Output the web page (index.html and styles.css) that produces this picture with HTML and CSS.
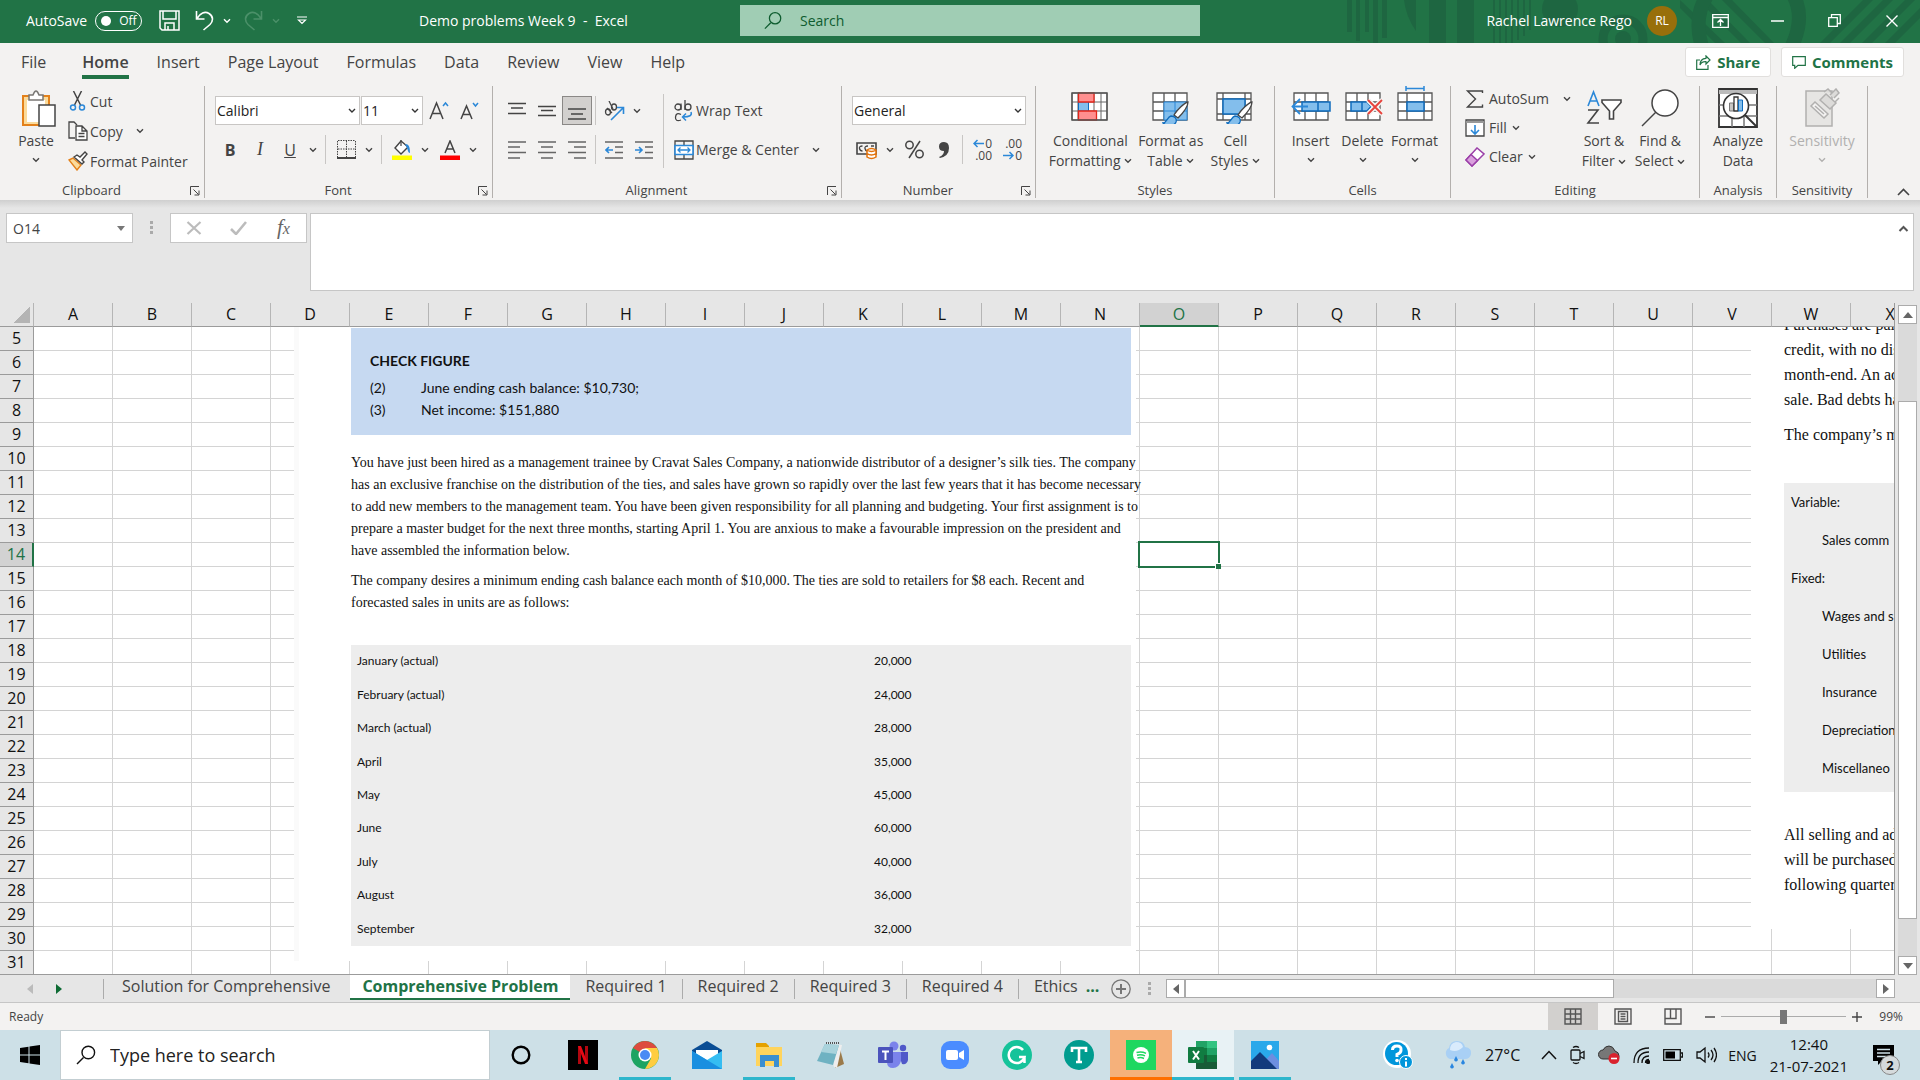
FILE: index.html
```html
<!DOCTYPE html>
<html lang="en">
<head>
  <meta charset="UTF-8" />
  <meta name="viewport" content="width=device-width, initial-scale=1.0"/>
  <title>Demo problems Week 9 - Excel</title>
  <link rel="stylesheet" href="styles.css">
</head>
<body>

  <!-- shared icons -->
  <svg class="defs" width="0" height="0">
    <symbol id="chev" viewBox="0 0 8 6"><path d="M1 1.2l3 3 3-3" fill="none" stroke="currentColor" stroke-width="1.4"/></symbol>
    <symbol id="launch" viewBox="0 0 10 10"><path d="M9 .5H.5V9M3.500 3.500l5 5M9 4.500V9H4.500" fill="none" stroke="currentColor"/></symbol>
    <symbol id="lens" viewBox="0 0 20 20"><path d="M1 19l6.500-6.500" fill="none" stroke="currentColor" stroke-width="1.4"/><circle cx="12.300" cy="7.500" r="6.300" fill="none" stroke="currentColor" stroke-width="1.4"/></symbol>
    <symbol id="brush" viewBox="0 0 28 26"><path d="M26 1C22 2 15 9 12 14l4 3C20 13 26 6 26 1z" fill="#fff" stroke="#444" stroke-width="1.300"/><path d="M1 22c4 0 4-6 8-7 4 0 6 3 5 6-2 5-10 4-13 1z" fill="#83beec" stroke="#0f6cbd" stroke-width="1.300"/></symbol>
  </svg>

  <header class="titlebar">
    <svg class="pattern" width="580" height="43" viewBox="0 0 580 43">
      <g fill="#1e6641">
        <path d="M7 0h5v32H7zM16 0h4v41h-4zM25 0h4v32h-4zM33 0h5v43h-5zM42 0h5v38h-5zM64 0h12v31q-10-14-12-31zM89 0h17v43H89zM117 0h17v43h-17z"/>
        <path d="M153 0h2v43h-2zM159 0h2v43h-2zM165 0h2v43h-2zM171 0h2v43h-2zM177 0h2v40h-2zM183 0h2v36h-2zM189 0h2v30h-2z"/>
        <circle cx="220" cy="9" r="18"/>
        <path d="M340 8l35 35h10L340 0zM358 0l43 43h9L368 0zM382 0l43 43h9L392 0z"/>
        <path d="M480 43l43-43h10l-43 43zM500 43l43-43h10l-43 43zM522 43l43-43h10l-43 43zM545 43l35-35v10l-25 25z"/>
      </g>
      <circle cx="283" cy="39" r="20" fill="none" stroke="#1e6641" stroke-width="9"/>
      <circle cx="283" cy="39" r="8" fill="#1e6641"/>
      <path d="M355-10q-20 25-8 60M434-10q18 25 0 60" transform="translate(16 0)" fill="none" stroke="#1e6641" stroke-width="14"/>
    </svg>
    <div class="quick">
      <label class="autosave">AutoSave <input type="checkbox" class="switch" id="autosave"><span class="switch-face">Off</span></label>
      <button class="tb-btn save" aria-label="Save"><svg width="21" height="21" viewBox="0 0 21 21" fill="none" stroke="#fff" stroke-width="1.500"><path d="M1 1h19v19H3l-2-2zM4 1v8h13V1M6 20v-7h9v7M9 20v-4"/></svg></button>
      <button class="tb-btn" aria-label="Undo"><svg width="19" height="21" viewBox="0 0 19 21" fill="none" stroke="#fff" stroke-width="1.600"><path d="M1.500 1v8h8M2 8.500C5 3 10 1 14 3.500c5 3 4 8 1 11L8.500 20"/></svg></button>
      <button class="tb-btn drop" aria-label="Undo list"><svg width="8" height="6"><use href="#chev"/></svg></button>
      <button class="tb-btn off" aria-label="Redo"><svg width="19" height="21" viewBox="0 0 19 21" fill="none" stroke="#4b9069" stroke-width="1.600"><path d="M17.500 1v8h-8M17 8.500C14 3 9 1 5 3.500c-5 3-4 8-1 11L10.500 20"/></svg></button>
      <button class="tb-btn drop off" aria-label="Redo list"><svg width="8" height="6"><use href="#chev"/></svg></button>
      <button class="tb-btn custom" aria-label="Customize toolbar"><svg width="10" height="9" viewBox="0 0 10 9" fill="none" stroke="#fff" stroke-width="1.200"><path d="M0 1h10M1.500 4l3.500 3.500L8.500 4z"/></svg></button>
    </div>
    <h1>Demo problems Week 9&nbsp; -&nbsp; Excel</h1>
    <div class="find">
      <svg width="18" height="19"><use href="#lens"/></svg>
      <input type="search" placeholder="Search" aria-label="Search">
    </div>
    <div class="account">
      <span>Rachel Lawrence Rego</span>
      <span class="avatar">RL</span>
    </div>
    <div class="window-btns">
      <button aria-label="Ribbon display options"><svg width="17" height="14" viewBox="0 0 17 14" fill="none" stroke="#fff" stroke-width="1.300"><path d="M.7.7h15.600v12.600H.7zM.7 3.500h15.600M8.500 12V6M5.500 8.500l3-3 3 3"/></svg></button>
      <button aria-label="Minimize"><svg width="13" height="2"><path d="M0 1h13" stroke="#fff" stroke-width="1.500"/></svg></button>
      <button aria-label="Restore"><svg width="13" height="13" viewBox="0 0 13 13" fill="none" stroke="#fff" stroke-width="1.300"><path d="M.7 3.700h8.600v8.600H.7zM3.500 3.500V.7h8.800v8.800H9.500"/></svg></button>
      <button aria-label="Close"><svg width="12" height="12" viewBox="0 0 12 12" stroke="#fff" stroke-width="1.400"><path d="M.5.5l11 11M11.500.5l-11 11"/></svg></button>
    </div>
  </header>

  <nav class="tabs">
    <a href="#">File</a>
    <a href="#" class="active">Home</a>
    <a href="#">Insert</a>
    <a href="#">Page Layout</a>
    <a href="#">Formulas</a>
    <a href="#">Data</a>
    <a href="#">Review</a>
    <a href="#">View</a>
    <a href="#">Help</a>
    <div class="tab-actions">
      <button><svg width="15" height="15" viewBox="0 0 15 15" fill="none" stroke="#217346" stroke-width="1.200"><path d="M4 5H.7v9.300H12V10M10 1l4 4-4 4V6.700C7 6.500 5 7.500 4 10c0-4 2.500-6.500 6-6.700z"/></svg>Share</button>
      <button><svg width="14" height="13" viewBox="0 0 14 13" fill="none" stroke="#217346" stroke-width="1.200"><path d="M.7.700h12.600v8.600H6L2.700 12.300V9.300h-2z"/></svg>Comments</button>
    </div>
  </nav>

  <section class="ribbon">
    <div class="group g-clipboard">
      <div class="tools">
        <button class="big paste"><svg width="36" height="40" viewBox="0 0 36 40"><path d="M2 8h26v29H2z" fill="#fbdb9b" stroke="#e3811b" stroke-width="2"/><path d="M6 12h18v22H6z" fill="#fff"/><path d="M8 12V7h4q3-8 6 0h4v5z" fill="#fff" stroke="#797774" stroke-width="1.500"/><path d="M18 17h16v21H18z" fill="#fff" stroke="#444" stroke-width="1.500"/></svg>Paste<svg width="8" height="6"><use href="#chev"/></svg></button>
        <div class="stack">
          <button class="row-btn"><svg width="16" height="20" viewBox="0 0 16 20" fill="none" stroke-width="1.500"><path d="M3.500 0l7 14M11.500 0l-7 14" stroke="#444"/><circle cx="3" cy="16.500" r="2.500" stroke="#2b88d8"/><circle cx="12" cy="16.500" r="2.500" stroke="#2b88d8"/></svg>Cut</button>
          <button class="row-btn"><svg width="20" height="20" viewBox="0 0 20 20" fill="none" stroke="#444" stroke-width="1.300"><path d="M7 17H1V1h5l3 3"/><path d="M8 5h6l5 5v9H8zM14 5v5h5M10.500 12.500h6M10.500 15.500h6" fill="#fff"/></svg>Copy <svg width="8" height="6"><use href="#chev"/></svg></button>
          <button class="row-btn"><svg width="20" height="20" viewBox="0 0 20 20" stroke-width="1.400"><path d="M1 9l4-2 8 7-4 5z" fill="#fbdb9b" stroke="#e3811b"/><path d="M6 6l8 7 2-2-2-2 5-6-2-2-5 5-3-2z" fill="#fff" stroke="#444"/></svg>Format Painter</button>
        </div>
      </div>
      <footer class="with-launch">Clipboard<svg class="launch" width="10" height="10"><use href="#launch"/></svg></footer>
    </div>

    <div class="group g-font">
      <div class="tools lines">
        <div class="line">
          <select class="s-font" aria-label="Font"><option>Calibri</option></select>
          <select class="s-size" aria-label="Font size"><option>11</option></select>
          <button class="ic" aria-label="Increase font size"><svg width="20" height="20" viewBox="0 0 20 20" fill="none" stroke-width="1.500"><path d="M1 18L7.500 2 14 18M3.500 12.500h8" stroke="#444"/><path d="M14 5l2.500-3L19 5" stroke="#2b88d8"/></svg></button>
          <button class="ic" aria-label="Decrease font size"><svg width="19" height="20" viewBox="0 0 19 20" fill="none" stroke-width="1.500"><path d="M1 18L6.500 5 12 18M3 13.500h7" stroke="#444"/><path d="M13 2l2.500 3L18 2" stroke="#2b88d8"/></svg></button>
        </div>
        <div class="line">
          <button class="ic b">B</button>
          <button class="ic i">I</button>
          <button class="ic u">U</button>
          <button class="dd" aria-label="Underline list"><svg width="8" height="6"><use href="#chev"/></svg></button>
          <i class="sep"></i>
          <button class="ic" aria-label="Borders"><svg width="19" height="19" viewBox="0 0 19 19" fill="none" stroke="#444"><path d="M1 .5h17M1 9h17M.5 1v16M9.500 1v16M18.500 1v16" stroke-dasharray="1.500 1"/><path d="M0 18h19" stroke-width="2"/></svg></button>
          <button class="dd" aria-label="Borders list"><svg width="8" height="6"><use href="#chev"/></svg></button>
          <i class="sep"></i>
          <button class="ic" aria-label="Fill color"><svg width="20" height="20" viewBox="0 0 20 20"><path d="M9 1l7 6-7 7-6-6z" fill="#fff" stroke="#444" stroke-width="1.400"/><path d="M9 6V0" stroke="#444" stroke-width="1.200"/><path d="M13 4c4 0 5 3 5 9-2 0-2-3-3-5z" fill="#2b88d8"/><path d="M0 15.500h20V20H0z" fill="#ff0"/></svg></button>
          <button class="dd fill-list" aria-label="Fill color list"><svg width="8" height="6"><use href="#chev"/></svg></button>
          <button class="ic" aria-label="Font color"><svg width="20" height="20" viewBox="0 0 20 20"><path d="M5 13L10 1l5 12M6.500 9h7" fill="none" stroke="#444" stroke-width="1.500"/><path d="M0 15.500h20V20H0z" fill="red"/></svg></button>
          <button class="dd" aria-label="Font color list"><svg width="8" height="6"><use href="#chev"/></svg></button>
        </div>
      </div>
      <footer class="with-launch">Font<svg class="launch" width="10" height="10"><use href="#launch"/></svg></footer>
    </div>

    <div class="group g-align">
      <div class="tools split">
        <div class="lines">
          <div class="line">
            <button class="ic" aria-label="Top align"><svg width="18" height="18" viewBox="0 0 18 18" stroke="#444" stroke-width="1.300"><path d="M0 1.500h18M3 6h12M0 11.500h18"/></svg></button>
            <button class="ic" aria-label="Middle align"><svg width="18" height="18" viewBox="0 0 18 18" stroke="#444" stroke-width="1.300"><path d="M0 4.500h18M3 8.500h12M0 13.500h18"/></svg></button>
            <button class="ic on" aria-label="Bottom align"><svg width="18" height="18" viewBox="0 0 18 18" stroke="#444" stroke-width="1.300"><path d="M0 7h18M3 12h12M0 17h18"/></svg></button>
            <i class="sep"></i>
            <button class="ic" aria-label="Orientation"><svg width="22" height="20" viewBox="0 0 22 20" fill="none" stroke-width="1.300"><g stroke="#444"><ellipse cx="5" cy="11" rx="2.500" ry="3"/><path d="M4 7l5 5"/><ellipse cx="11" cy="6" rx="2.500" ry="3"/><path d="M6 0l4 8"/></g><path d="M8 19L20 7M14 6.500h6.500V13" stroke="#2b88d8" stroke-width="1.600"/></svg></button>
            <button class="dd" aria-label="Orientation list"><svg width="8" height="6"><use href="#chev"/></svg></button>
          </div>
          <div class="line">
            <button class="ic" aria-label="Align left"><svg width="18" height="18" viewBox="0 0 18 18" stroke="#666" stroke-width="1.600"><path d="M0 1h18M0 6h12M0 11.500h18M0 17h12"/></svg></button>
            <button class="ic" aria-label="Center"><svg width="18" height="18" viewBox="0 0 18 18" stroke="#666" stroke-width="1.600"><path d="M0 1h18M3 6h12M0 11.500h18M3 17h12"/></svg></button>
            <button class="ic" aria-label="Align right"><svg width="18" height="18" viewBox="0 0 18 18" stroke="#666" stroke-width="1.600"><path d="M0 1h18M6 6h12M0 11.500h18M6 17h12"/></svg></button>
            <i class="sep"></i>
            <button class="ic" aria-label="Decrease indent"><svg width="18" height="18" viewBox="0 0 18 18" fill="none" stroke="#666" stroke-width="1.600"><path d="M0 1h18M10 6h8M10 11.500h8M0 17h18"/><path d="M8 9H1M4 6L1 9l3 3" stroke="#2b88d8"/></svg></button>
            <button class="ic" aria-label="Increase indent"><svg width="18" height="18" viewBox="0 0 18 18" fill="none" stroke="#666" stroke-width="1.600"><path d="M0 1h18M10 6h8M10 11.500h8M0 17h18"/><path d="M0 9h7M4 6l3 3-3 3" stroke="#2b88d8"/></svg></button>
          </div>
        </div>
        <div class="lines wraps">
          <div class="line"><button class="row-btn"><svg width="20" height="22" viewBox="0 0 20 22" fill="none" stroke="#444" stroke-width="1.300"><circle cx="4" cy="7" r="3"/><path d="M7 3.500V10M11 0v10"/><circle cx="14" cy="7" r="3"/><path d="M7 14.500Q2 12 1.500 17T7 20"/><path d="M17 12q2 5-8 5M12 13.500L8.500 17l3.500 3.500" stroke="#2b88d8" stroke-width="1.500"/></svg>Wrap Text</button></div>
          <div class="line"><button class="row-btn"><svg width="20" height="20" viewBox="0 0 20 20" fill="none" stroke="#444" stroke-width="1.300"><path d="M1 1h18v18H1zM10 1v4M10 15v4"/><path d="M1 5.500h18v9H1z" fill="#fff" stroke="#2b88d8" stroke-width="1.600"/><path d="M4 10h12M6.500 7.500L4 10l2.500 2.500M13.500 7.500L16 10l-2.500 2.500" stroke="#2b88d8"/></svg>Merge &amp; Center <svg width="8" height="6"><use href="#chev"/></svg></button></div>
        </div>
      </div>
      <footer class="with-launch">Alignment<svg class="launch" width="10" height="10"><use href="#launch"/></svg></footer>
    </div>

    <div class="group g-number">
      <div class="tools lines">
        <div class="line"><select class="s-num" aria-label="Number format"><option>General</option></select></div>
        <div class="line">
          <button class="ic" aria-label="Accounting format"><svg width="22" height="20" viewBox="0 0 22 20" fill="none"><path d="M1 3h19v11H1z" stroke="#444" stroke-width="1.600"/><path d="M6.500 6Q3 6 3.500 8.500T6.500 11M12 6Q8.500 6 9 8.500t2 2.500M15 6h3" stroke="#444" stroke-width="1.300"/><path d="M11 10v7q4.500 3 9 0v-7q-4.500-3-9 0zM11 10q4.500 3 9 0M11 13.500q4.500 3 9 0" fill="#fff" stroke="#e3730b" stroke-width="1.500"/></svg></button>
          <button class="dd" aria-label="Accounting list"><svg width="8" height="6"><use href="#chev"/></svg></button>
          <button class="ic pct" aria-label="Percent"><svg width="19" height="19" viewBox="0 0 19 19" fill="none" stroke="#444" stroke-width="1.500"><circle cx="4.500" cy="5" r="3.700"/><circle cx="14.500" cy="14" r="3.700"/><path d="M15 1L4 18"/></svg></button>
          <button class="ic" aria-label="Comma"><svg width="12" height="18" viewBox="0 0 12 18"><path d="M1 16q5-2 5-6-5 0-5-4.500T6 1q5 0 5 6 0 8-9 10z" fill="#444"/></svg></button>
          <i class="sep"></i>
          <button class="ic dec" aria-label="Increase decimal"><span><svg width="11" height="9" viewBox="0 0 11 9"><path d="M11 4.500H1M4.500 1L1 4.500 4.500 8"/></svg>0</span><span>.00</span></button>
          <button class="ic dec" aria-label="Decrease decimal"><span>.00</span><span><svg width="11" height="9" viewBox="0 0 11 9"><path d="M0 4.500h10M6.500 1L10 4.500 6.500 8"/></svg>0</span></button>
        </div>
      </div>
      <footer class="with-launch">Number<svg class="launch" width="10" height="10"><use href="#launch"/></svg></footer>
    </div>

    <div class="group g-styles">
      <div class="tools">
        <button class="big"><svg width="38" height="34" viewBox="0 0 38 34"><path d="M1 3h35v27H1zM1 12h35M1 21h35M7 3v27M15 3v27M23 3v27M30 3v27" fill="#fff" stroke="#666"/><path d="M7.500 12h10v9h-10z" fill="#83beec" stroke="#0f6cbd"/><path d="M7.500 3h15.500v9H7.500zM7.500 21h18v9h-18z" fill="#ff8f8f" stroke="#e3271b" stroke-width="1.300"/><path d="M1 3h35v27H1z" fill="none" stroke="#555" stroke-width="1.500"/></svg>Conditional<span>Formatting <svg width="8" height="6"><use href="#chev"/></svg></span></button>
        <button class="big"><svg width="38" height="34" viewBox="0 0 38 34"><path d="M1 3h34v27H1zM1 12h34M1 21h34M12 3v27M23 3v27" fill="#fff" stroke="#555" stroke-width="1.300"/><path d="M12 12h23v18H12zM23 12v18M12 21h23" fill="#83beec" stroke="#2b88d8"/><use href="#brush" x="10" y="11" width="28" height="26"/></svg>Format as<span>Table <svg width="8" height="6"><use href="#chev"/></svg></span></button>
        <button class="big"><svg width="38" height="34" viewBox="0 0 38 34"><path d="M1 3h34v27H1zM7 3v27M29 3v27M1 9h34M1 24h34" fill="#fff" stroke="#555" stroke-width="1.300"/><path d="M7 9h22v15H7z" fill="#83beec" stroke="#0f6cbd" stroke-width="1.500"/><use href="#brush" x="10" y="11" width="28" height="26"/></svg>Cell<span>Styles <svg width="8" height="6"><use href="#chev"/></svg></span></button>
      </div>
      <footer>Styles</footer>
    </div>

    <div class="group g-cells">
      <div class="tools">
        <button class="big"><svg width="40" height="34" viewBox="0 0 40 34"><path d="M3 3h34v27H3zM14 3v27M25 3v27M3 12h34M3 21h34" fill="#fff" stroke="#555" stroke-width="1.300"/><path d="M11 12h28v9H11zM27 12v9" fill="#83beec" stroke="#0f6cbd" stroke-width="1.500"/><path d="M17 16.500H2M9 9l-7.500 7.500L9 24" fill="none" stroke="#2b88d8" stroke-width="1.800"/></svg>Insert<svg width="8" height="6"><use href="#chev"/></svg></button>
        <button class="big"><svg width="40" height="34" viewBox="0 0 40 34"><path d="M3 3h34v27H3zM14 3v27M25 3v27M3 12h34M3 21h34" fill="#fff" stroke="#555" stroke-width="1.300"/><path d="M8 12h16l4 4.500-4 4.500H8zM19 12v9" fill="#83beec" stroke="#0f6cbd" stroke-width="1.500"/><path d="M25 10l14 14M39 10L25 24" stroke="#f4f3f1" stroke-width="5"/><path d="M25 10l14 14M39 10L25 24" stroke="#e8423b" stroke-width="1.800"/></svg>Delete<svg width="8" height="6"><use href="#chev"/></svg></button>
        <button class="big tall"><svg width="38" height="40" viewBox="0 0 38 40"><path d="M2 9h34v27H2zM11 9v27M28 9v27M2 18h34M2 27h34" fill="#fff" stroke="#555" stroke-width="1.300"/><path d="M11 18h17v9H11z" fill="#83beec" stroke="#0f6cbd" stroke-width="1.500"/><path d="M10 4.500h18M10 2v5M28 2v5" stroke="#2b88d8" stroke-width="1.500"/></svg>Format<svg width="8" height="6"><use href="#chev"/></svg></button>
      </div>
      <footer>Cells</footer>
    </div>

    <div class="group g-editing">
      <div class="tools">
        <div class="stack">
          <button class="row-btn wide"><svg width="20" height="18" viewBox="0 0 20 18" fill="none" stroke="#444" stroke-width="1.400"><path d="M17.500 3V1H2.500l8 8-8 8h15v-2.500"/></svg>AutoSum <svg width="8" height="6"><use href="#chev"/></svg></button>
          <button class="row-btn"><svg width="20" height="18" viewBox="0 0 20 18" fill="none"><path d="M1 1h18v16H1z" fill="#fff" stroke="#444" stroke-width="1.300"/><path d="M1 2h18v2H1z" fill="#999"/><path d="M10 6v9M6 11l4 4 4-4" stroke="#2b88d8" stroke-width="1.600"/></svg>Fill <svg width="8" height="6"><use href="#chev"/></svg></button>
          <button class="row-btn"><svg width="20" height="20" viewBox="0 0 20 20"><path d="M1 13L12 1l7 6L7 19z" fill="#fff" stroke="#9b3fa8" stroke-width="1.500"/><path d="M1 13l5-5.500 6.500 6L7 19z" fill="#d9a0dd" stroke="#9b3fa8" stroke-width="1.500"/></svg>Clear <svg width="8" height="6"><use href="#chev"/></svg></button>
        </div>
        <button class="big sort"><svg width="38" height="40" viewBox="0 0 38 40" fill="none" stroke-width="1.600"><path d="M3 18L8.500 4 14 18M5 13h7" stroke="#2b88d8"/><path d="M3 22h10L3 35h11" stroke="#444"/><path d="M17 12h19v2.500L28.500 23v8h-4v-8L17 14.500z" fill="#fff" stroke="#444"/></svg>Sort &amp;<span>Filter <svg width="8" height="6"><use href="#chev"/></svg></span></button>
        <button class="big"><svg width="40" height="40" viewBox="0 0 40 40" fill="none" stroke="#444" stroke-width="1.500"><circle cx="25" cy="15" r="13" fill="#fff"/><path d="M16 24L2 38"/></svg>Find &amp;<span>Select <svg width="8" height="6"><use href="#chev"/></svg></span></button>
      </div>
      <footer>Editing</footer>
    </div>

    <div class="group g-analysis">
      <div class="tools">
        <button class="big"><svg width="40" height="40" viewBox="0 0 40 40" fill="none" stroke="#333"><path d="M1 1h38v38H1z" fill="#fff" stroke-width="1.800"/><path d="M1 2h38v4H1z" fill="#bbb" stroke="none"/><path d="M1 17h38M1 28h38M14 28v11M26 28v11" stroke="#777" stroke-width="1.500"/><circle cx="18" cy="18" r="12.500" fill="#fff" stroke-width="1.600"/><path d="M11.500 15h4v8h-4z" fill="#c8c6c4" stroke="#777"/><path d="M16 9h4v14h-4z" fill="#fff" stroke-width="1.300"/><path d="M20.500 12h4v11h-4z" fill="#83beec" stroke="#0f6cbd"/><path d="M27 27l12 12" stroke-width="2"/></svg>Analyze<span>Data</span></button>
      </div>
      <footer>Analysis</footer>
    </div>

    <div class="group g-sens">
      <div class="tools">
        <button class="big" disabled><svg width="38" height="40" viewBox="0 0 38 40" fill="#e6e5e3" stroke="#b1b0af" stroke-width="1.500"><path d="M3 3h26v35H3z"/><path d="M8 18l4-4 13 12-4 4zM12 18l9 8" fill="#f3f2f1"/><path d="M17 12l6-6 10 9-6 6zM21 4l4-3 4 4M27 7l6-6 3 4-5 5M32 14l4-4" fill="#dcdbd9"/></svg>Sensitivity<svg width="8" height="6"><use href="#chev"/></svg></button>
      </div>
      <footer>Sensitivity</footer>
    </div>
    <button class="collapse" aria-label="Collapse ribbon"><svg width="13" height="8" viewBox="0 0 13 8"><path d="M1 7l5.500-5.500L12 7" fill="none" stroke="#444" stroke-width="1.600"/></svg></button>
  </section>

  <section class="formula">
    <div class="namebox"><input type="text" value="O14" aria-label="Name box"><i class="tri-down"></i></div>
    <i class="dots"></i>
    <div class="fx">
      <button aria-label="Cancel"><svg width="16" height="14" viewBox="0 0 16 14"><path d="M1.500 1l13 12M14.500 1l-13 12" stroke="#bcbcbc" stroke-width="2.200"/></svg></button>
      <button aria-label="Enter"><svg width="17" height="14" viewBox="0 0 17 14"><path d="M1 8l5 5L16 1" fill="none" stroke="#bcbcbc" stroke-width="2.600"/></svg></button>
      <button class="fn" aria-label="Insert function">f<small>x</small></button>
    </div>
    <div class="entry"><textarea aria-label="Formula bar"></textarea><svg width="11" height="7" viewBox="0 0 11 7"><path d="M1.500 6l4-4 4 4" fill="none" stroke="#555" stroke-width="2"/></svg></div>
  </section>

  <main class="sheet">
    <div class="grid">
      <table class="cells">
        <thead><tr id="cols"><th class="corner"></th></tr></thead>
        <tbody id="rows"></tbody>
      </table>

      <article class="picture problem">
        <div class="check">
          <h2>CHECK FIGURE</h2>
          <dl>
            <dt>(2)</dt><dd>June ending cash balance: $10,730;</dd>
            <dt>(3)</dt><dd>Net income: $151,880</dd>
          </dl>
        </div>
        <p>You have just been hired as a management trainee by Cravat Sales Company, a nationwide distributor of a designer’s silk ties. The company<br>
          has an exclusive franchise on the distribution of the ties, and sales have grown so rapidly over the last few years that it has become necessary<br>
          to add new members to the management team. You have been given responsibility for all planning and budgeting. Your first assignment is to<br>
          prepare a master budget for the next three months, starting April 1. You are anxious to make a favourable impression on the president and<br>
          have assembled the information below.</p>
        <p>The company desires a minimum ending cash balance each month of $10,000. The ties are sold to retailers for $8 each. Recent and<br>
          forecasted sales in units are as follows:</p>
        <table class="sales">
          <tr><td>January (actual)</td><td>20,000</td></tr>
          <tr><td>February (actual)</td><td>24,000</td></tr>
          <tr><td>March (actual)</td><td>28,000</td></tr>
          <tr><td>April</td><td>35,000</td></tr>
          <tr><td>May</td><td>45,000</td></tr>
          <tr><td>June</td><td>60,000</td></tr>
          <tr><td>July</td><td>40,000</td></tr>
          <tr><td>August</td><td>36,000</td></tr>
          <tr><td>September</td><td>32,000</td></tr>
        </table>
      </article>

      <article class="picture expenses">
        <p>Purchases are pai<br>credit, with no dis<br>month-end. An ac<br>sale. Bad debts ha</p>
        <p>The company’s m</p>
        <ul>
          <li>Variable:</li>
          <li class="sub">Sales comm</li>
          <li>Fixed:</li>
          <li class="sub">Wages and s</li>
          <li class="sub">Utilities</li>
          <li class="sub">Insurance</li>
          <li class="sub">Depreciation</li>
          <li class="sub">Miscellaneo</li>
        </ul>
        <p>All selling and ad<br>will be purchased<br>following quarter.</p>
      </article>
    </div>
    <div class="vscroll">
      <button aria-label="Scroll up"><i class="tri up"></i></button>
      <div class="track"><div class="thumb"></div></div>
      <button aria-label="Scroll down"><i class="tri down"></i></button>
    </div>
  </main>

  <div class="sheet-tabs">
    <div class="nav-btns"><i class="tri left"></i><i class="tri right"></i></div>
    <button class="first">Solution for Comprehensive</button>
    <button class="active">Comprehensive Problem</button>
    <button>Required 1</button>
    <button>Required 2</button>
    <button>Required 3</button>
    <button>Required 4</button>
    <button class="last">Ethics <b>...</b></button>
    <button class="add" aria-label="New sheet"><svg width="20" height="20" viewBox="0 0 20 20" fill="none" stroke="#777"><circle cx="10" cy="10" r="9.200" stroke-width="1.300"/><path d="M10 5v10M5 10h10" stroke-width="2"/></svg></button>
    <i class="dots"></i>
    <div class="hscroll">
      <button aria-label="Scroll left"><i class="tri left"></i></button>
      <div class="track"><div class="thumb"></div></div>
      <button aria-label="Scroll right"><i class="tri right"></i></button>
    </div>
  </div>

  <div class="status">
    <span>Ready</span>
    <div class="views">
      <button class="on" aria-label="Normal"><svg width="18" height="17" viewBox="0 0 18 17" fill="none" stroke="#555" stroke-width="1.400"><path d="M1 1h16v15H1zM6.500 1v15M11.500 1v15M1 6h16M1 11h16"/></svg></button>
      <button aria-label="Page layout"><svg width="18" height="17" viewBox="0 0 18 17" fill="none" stroke="#555" stroke-width="1.400"><path d="M1 1h16v15H1zM4.500 3.500h9v10h-9zM6.500 6h5M6.500 8.500h5M6.500 11h5"/></svg></button>
      <button aria-label="Page break"><svg width="18" height="17" viewBox="0 0 18 17" fill="none" stroke="#555" stroke-width="1.400"><path d="M1 1h16v15H1zM1 10.500h11V1M6.500 1v9.500"/></svg></button>
    </div>
    <div class="zoom">
      <button aria-label="Zoom out"><svg width="10" height="10"><path d="M0 5h10" stroke="#444" stroke-width="1.400"/></svg></button>
      <input type="range" min="0" max="100" value="50" aria-label="Zoom">
      <button aria-label="Zoom in"><svg width="10" height="10"><path d="M0 5h10M5 0v10" stroke="#444" stroke-width="1.400"/></svg></button>
      <span>99%</span>
    </div>
  </div>

  <footer class="taskbar">
    <button class="start" aria-label="Start"><svg width="20" height="20" viewBox="0 0 20 20"><path d="M0 3l8.500-1.300v7.800H0zM9.500 1.500L20 0v9.500H9.500zM0 10.500h8.500v7.800L0 17zM9.500 10.500H20V20L9.500 18.500z"/></svg></button>
    <div class="task-search">
      <svg width="20" height="20"><use href="#lens"/></svg>
      <input type="text" placeholder="Type here to search" aria-label="Type here to search">
    </div>
    <div class="apps">
      <button aria-label="Cortana"><svg width="20" height="20"><circle cx="10" cy="10" r="8.300" fill="none" stroke="#000" stroke-width="2.400"/></svg></button>
      <button aria-label="Netflix"><svg width="30" height="30" viewBox="0 0 30 30"><path d="M0 0h30v30H0z"/><path d="M10 6h3v18h-3zM17 6h3v18h-3z" fill="#b1060f"/><path d="M10 6h3l7 18h-3z" fill="#e50914"/></svg></button>
      <button class="open" aria-label="Chrome"><svg width="28" height="28" viewBox="0 0 28 28"><circle cx="14" cy="14" r="14" fill="#1da462"/><path d="M14 14L1.900 7A14 14 0 0 1 26.100 7z" fill="#dd4b3e"/><path d="M14 7h12.100A14 14 0 0 1 14 28l6-10.500z" fill="#ffcd40"/><circle cx="14" cy="14" r="6.500" fill="#fff"/><circle cx="14" cy="14" r="5" fill="#4a8af4"/></svg></button>
      <button aria-label="Mail"><svg width="30" height="28" viewBox="0 0 30 28"><path d="M0 9L15 0l15 9v6H0z" fill="#0a4d94"/><path d="M4 9h22v9L15 22 4 18z" fill="#fff"/><path d="M0 10l15 9L30 10v18H0z" fill="#35bdf2"/><path d="M0 10l30 18H0z" fill="#1a8fe0"/></svg></button>
      <button class="open" aria-label="File Explorer"><svg width="28" height="26" viewBox="0 0 28 26"><path d="M1 1h10l3 3v4H1z" fill="#e5a100"/><path d="M1 5h26v19H1z" fill="#ffd45c"/><path d="M5 13h19v12h-5v-6h-9v6H5z" fill="#3a8fd0"/></svg></button>
      <button aria-label="Notepad"><svg width="30" height="28" viewBox="0 0 30 28"><path d="M23 4l5 19-9 4z" fill="#9b7a4a"/><path d="M11 2l15 2-5 23-3-1z" fill="#eee"/><path d="M9 3l14 1-6 20L1 20z" fill="#6fb2c2"/><path d="M9 3l14 1-3 9L5 11z" fill="#a9d3dc"/><path d="M10 2h13" stroke="#555" stroke-width="2" stroke-dasharray="1 1"/></svg></button>
      <button aria-label="Teams"><svg width="30" height="28" viewBox="0 0 30 28"><circle cx="16" cy="5" r="4.500" fill="#7b83eb"/><circle cx="25" cy="7" r="3.200" fill="#5059c9"/><path d="M20 11h10v8q-1 5-6 4z" fill="#5059c9"/><path d="M9 11h14v9q-2 7-8 7t-6-6z" fill="#7b83eb"/><rect y="6" width="15" height="16" rx="1" fill="#4b53bc"/><path d="M4 10.500h7M7.500 10.500V19" stroke="#fff" stroke-width="2"/></svg></button>
      <button aria-label="Zoom"><svg width="28" height="28" viewBox="0 0 28 28"><rect width="28" height="28" rx="9" fill="#4a8cff"/><rect x="5" y="9" width="12" height="10" rx="2" fill="#fff"/><path d="M18 12l5-3v10l-5-3z" fill="#fff"/></svg></button>
      <button aria-label="Grammarly"><svg width="30" height="30" viewBox="0 0 30 30"><circle cx="15" cy="15" r="15" fill="#15c39a"/><path d="M21 10a8 8 0 1 0 1.500 7H17M22.500 17v6" fill="none" stroke="#fff" stroke-width="2.500"/></svg></button>
      <button aria-label="Thesaurus"><svg width="30" height="30" viewBox="0 0 30 30"><circle cx="15" cy="15" r="15" fill="#009c8f"/><path d="M8 12V8h14v4M15 8v14M12 22h6" fill="none" stroke="#fff" stroke-width="2.600"/></svg></button>
      <button class="alert" aria-label="Spotify"><svg width="30" height="30" viewBox="0 0 30 30"><path d="M0 0h30v30H0z" fill="#1ed760"/><circle cx="15" cy="15" r="8" fill="#fff"/><path d="M10.500 12.500q5-1.500 9.500.8M11 15.300q4-1.200 8 .6M11.500 18q3.500-1 6.500.5" fill="none" stroke="#1ed760" stroke-width="1.500"/></svg></button>
      <button class="open current" aria-label="Excel"><svg width="30" height="28" viewBox="0 0 30 28"><path d="M8 0h21v28H8z" fill="#21a366"/><path d="M8 7h11v7H8z" fill="#107c41"/><path d="M19 0h10v7H19z" fill="#33c481"/><path d="M8 14h21v14H8z" fill="#185c37"/><path d="M19 14h10v7H19z" fill="#107c41"/><rect y="6" width="16" height="16" rx="1" fill="#107c41"/><path d="M5 10l6 8.500M11 10l-6 8.500" stroke="#fff" stroke-width="2"/></svg></button>
      <button class="open" aria-label="Photos"><svg width="28" height="28" viewBox="0 0 28 28"><path d="M0 0h28v28H0z" fill="#2aa8ea"/><path d="M12 22l9-10 7 8v8H12z" fill="#6d8ee0"/><path d="M0 20l9-9 17 17H0z" fill="#123a7c"/><circle cx="18.500" cy="6.500" r="2.800" fill="#fff"/></svg></button>
    </div>
    <div class="tray">
      <svg width="30" height="30" viewBox="0 0 30 30"><circle cx="14" cy="14" r="14" fill="#fff"/><circle cx="13.500" cy="13.500" r="11.500" fill="#0096db"/><path d="M9.500 10q0-4 4.500-4t4 4q0 3-4 4.500v2.500" fill="none" stroke="#fff" stroke-width="3"/><circle cx="14" cy="20.500" r="1.800" fill="#fff"/><circle cx="23" cy="22" r="6.500" fill="#0096db" stroke="#fff"/><path d="M23 18v2M23 21.500v5" stroke="#fff" stroke-width="2"/></svg>
      <svg class="weather" width="28" height="30" viewBox="0 0 28 30"><path d="M6 19a6 6 0 0 1-1-11q1-7 8-7t8 6q7 1 6 7-1 5-6 5z" fill="#a9d0f5"/><path d="M6 10q0-7 6-8 6 0 7 5-6 6-13 3z" fill="#d9ebfc"/><path d="M12 16l2 4q-2 3-4 0zM19 19l2 4q-2 3-4 0zM8 23l2 4q-2 3-4 0z" fill="#2a86e0"/></svg>
      <span class="temp">27°C</span>
      <svg class="up" width="16" height="10" viewBox="0 0 16 10"><path d="M1 9l7-7.500L15 9" fill="none" stroke="#111" stroke-width="1.500"/></svg>
      <svg width="15" height="20" viewBox="0 0 15 20" fill="none" stroke="#111" stroke-width="1.300"><rect x="1" y="5" width="9" height="10" rx="1"/><path d="M10 8.500l4-2v7l-4-2M3 2.500Q6 .5 9 2.500M3 17.500q3 2 6 0"/></svg>
      <svg width="22" height="20" viewBox="0 0 22 20"><path d="M5 14a4.500 4.500 0 0 1 0-9q2-4 6-4t6 5q4 1 4 5t-4 3z" fill="#777" stroke="#333"/><circle cx="16" cy="13.500" r="5.500" fill="#d9232e"/><path d="M13 13.500h6" stroke="#fff" stroke-width="1.600"/></svg>
      <svg width="17" height="17" viewBox="0 0 17 17" fill="none" stroke="#111" stroke-width="1.300"><path d="M1 16Q1 1 16 1M5 16Q5 5 16 5M9 16q0-7 7-7M12.500 16q0-3.500 3.500-3.500"/><circle cx="15" cy="15" r="1.500" fill="#111"/></svg>
      <svg width="20" height="12" viewBox="0 0 20 12"><path d="M.7.7h16.600v10.600H.7zM18 4h1.500v4H18" fill="none" stroke="#111" stroke-width="1.300"/><path d="M2.500 2.500H12v7H2.500z"/></svg>
      <svg width="21" height="18" viewBox="0 0 21 18" fill="none" stroke="#111" stroke-width="1.300"><path d="M1 6v6h3l5 4V2L4 6zM12 6.500q2 2.500 0 5M15 4q4 5 0 10M18 2q5 7 0 14"/></svg>
      <span class="lang">ENG</span>
      <div class="clock"><span>12:40</span><span>21-07-2021</span></div>
      <button class="notes" aria-label="Notifications"><svg width="21" height="20" viewBox="0 0 21 20"><path d="M0 0h21v16H9l-4 4v-4H0z"/><path d="M4 4.500h13M4 8h13M4 11.500h9" stroke="#cde0e7" stroke-width="1.300"/></svg><b>2</b></button>
    </div>
  </footer>

  <script src="script.js"></script>
</body>
</html>
```

FILE: styles.css
```css
*,
*::before,
*::after {
  margin: 0;
  padding: 0;
  box-sizing: border-box;
}

body {
  display: flex;
  flex-direction: column;
  height: 100vh;
  overflow: hidden;
  background-color: #e6e6e6;
  color: #444;
  font-family: 'Open Sans', 'Noto Sans', sans-serif;
  font-size: 14px;
}

button,
input,
select,
textarea {
  font: inherit;
  color: inherit;
  background: none;
  border: none;
  outline: none;
}

button {
  display: flex;
  align-items: center;
  justify-content: center;
  white-space: nowrap;
}

svg {
  display: block;
  flex: none;
}

.defs {
  position: absolute;
}

/* title bar */
.titlebar {
  position: relative;
  display: flex;
  align-items: center;
  flex: none;
  height: 43px;
  padding-bottom: 2px;
  background-color: #217346;
  color: white;
}

.pattern {
  position: absolute;
  right: 0;
  top: 0;
}

.quick {
  display: flex;
  align-items: center;
  width: 419px;
  padding-left: 26px;
}

.autosave {
  display: flex;
  align-items: center;
  gap: 8px;
}

.switch {
  position: absolute;
  opacity: 0;
}

.switch-face {
  display: flex;
  align-items: center;
  gap: 8px;
  width: 47px;
  height: 20px;
  padding-left: 5px;
  border: 1px solid white;
  border-radius: 10px;
  font-size: 12px;
}

.switch-face::before {
  content: "";
  width: 10px;
  height: 10px;
  border-radius: 5px;
  background-color: white;
}

.tb-btn {
  width: 26px;
  height: 30px;
}

.tb-btn.save {
  margin: 0 9px 0 14px;
}

.tb-btn.drop {
  width: 20px;
  margin-right: 3px;
}

.tb-btn.off {
  color: #4b9069;
}

.titlebar h1 {
  width: 321px;
  font-size: 14px;
  font-weight: 400;
}

.find {
  display: flex;
  align-items: center;
  width: 460px;
  height: 31px;
  padding-left: 24px;
  gap: 18px;
  background-color: #a0cdb4;
  color: #0e5c2f;
}

.find input::placeholder {
  color: #0e5c2f;
  opacity: 1;
}

.account {
  position: relative;
  display: flex;
  align-items: center;
  gap: 15px;
  margin-left: auto;
}

.avatar {
  display: flex;
  align-items: center;
  justify-content: center;
  width: 30px;
  height: 30px;
  border-radius: 15px;
  background-color: #986f0b;
  font-size: 12px;
}

.window-btns {
  position: relative;
  display: flex;
  margin-left: 15px;
}

.window-btns button {
  width: 57px;
  height: 41px;
}

/* ribbon tabs */
.tabs {
  display: flex;
  align-items: center;
  flex: none;
  height: 38px;
  padding: 0 16px 0 21px;
  background-color: #f3f2f1;
}

.tabs a {
  margin-right: 28px;
  color: #444;
  font-size: 16px;
  line-height: 25px;
  text-decoration: none;
}

.tabs a:first-child {
  margin-right: 36px;
}

.tabs a.active {
  font-weight: 600;
  box-shadow: 0 4px #217346;
}

.tab-actions {
  display: flex;
  gap: 10px;
  margin-left: auto;
}

.tab-actions button {
  height: 30px;
  gap: 6px;
  padding: 0 10px;
  border: 1px solid #e1dfdd;
  border-radius: 3px;
  background-color: white;
  color: #217346;
  font-size: 15px;
  font-weight: 700;
}

/* ribbon */
.ribbon {
  position: relative;
  display: flex;
  flex: none;
  height: 119px;
  padding: 5px 0 2px;
  background-color: #f3f2f1;
}

.group {
  display: flex;
  flex-direction: column;
  border-right: 1px solid #b3b0ad;
}

.tools {
  display: flex;
  flex: 1;
}

.group footer {
  position: relative;
  font-size: 13px;
  line-height: 15px;
  text-align: center;
}

.group .with-launch {
  padding-right: 21px;
}

.launch {
  position: absolute;
  right: 4px;
  top: 3px;
}

.g-clipboard { width: 205px; }
.g-font { width: 288px; }
.g-align { width: 349px; }
.g-number { width: 194px; }
.g-styles { width: 239px; }
.g-cells { width: 176px; }
.g-editing { width: 249px; }
.g-analysis { width: 77px; }
.g-sens { width: 91px; }

.big {
  flex-direction: column;
  justify-content: flex-start;
  min-width: 52px;
  line-height: 20px;
}

.big > svg:first-child {
  margin: 2px 0 3px;
}

.big > svg:last-child {
  margin-top: 6px;
}

.big span svg {
  display: inline-block;
  vertical-align: middle;
}

.big:disabled {
  color: #b1b0af;
}

.paste {
  margin: 0 2px 0 10px;
}

.paste svg:first-child {
  position: relative;
  left: 3px;
}

.stack {
  display: flex;
  flex-direction: column;
}

.row-btn {
  justify-content: flex-start;
  height: 29px;
  gap: 2px;
}

.row-btn svg:first-child {
  width: 20px;
}

.row-btn svg + svg {
  margin-left: 11px;
}

.g-clipboard .stack {
  padding-left: 4px;
}

.g-clipboard .row-btn {
  height: 30px;
}

.lines {
  display: flex;
  flex-direction: column;
  gap: 10px;
  padding-top: 10px;
}

.line {
  display: flex;
  align-items: center;
  height: 29px;
}

.ic {
  width: 30px;
  height: 29px;
}

.ic.on {
  border: 1px solid #8a8886;
  background-color: #d2d0ce;
}

.dd {
  width: 15px;
  height: 29px;
}

.fill-list {
  margin-right: 3px;
}

.sep {
  width: 1px;
  height: 29px;
  margin: 0 3px;
  background-color: #c8c6c4;
}

.ribbon select {
  height: 29px;
  padding: 0 1px;
  border: 1px solid #c8c6c4;
  background: white url("data:image/svg+xml,%3Csvg xmlns='http://www.w3.org/2000/svg' width='8' height='6'%3E%3Cpath d='M1 1l3 3 3-3' fill='none' stroke='%23333' stroke-width='1.4'/%3E%3C/svg%3E") no-repeat right 3px center;
  appearance: none;
  color: #222;
}

.g-font .lines {
  padding-left: 10px;
}

.s-font {
  width: 145px;
  margin-right: 1px;
}

.ribbon .s-size {
  width: 62px;
  margin-right: 1px;
}

.g-font .sep {
  margin: 0 5px;
}

.b {
  font-size: 16px;
  font-weight: 700;
}

.i {
  font-family: 'Liberation Serif', serif;
  font-size: 18px;
  font-style: italic;
}

.u {
  font-size: 16px;
  text-decoration: underline;
}

.g-align .split {
  gap: 2px;
  padding-left: 9px;
}

.split > .lines:first-child {
  width: 161px;
}

.wraps {
  position: relative;
  padding-left: 9px;
}

.wraps::before {
  content: "";
  position: absolute;
  left: -2px;
  top: 8px;
  width: 1px;
  height: 74px;
  background-color: #c8c6c4;
}

.g-number .lines {
  padding-left: 10px;
}

.s-num {
  width: 174px;
}

.dec {
  flex-direction: column;
  align-items: flex-end;
  padding-right: 4px;
  font-size: 12px;
  line-height: 12px;
}

.dec span {
  display: flex;
  align-items: center;
  gap: 1px;
}

.dec svg {
  fill: none;
  stroke: #2b88d8;
  stroke-width: 1.5;
}

.pct {
  margin-left: 2px;
}

.g-styles .tools {
  justify-content: center;
  gap: 6px;
}

.g-cells .tools {
  justify-content: center;
}

.g-cells .big svg:first-child,
.g-styles .big svg:first-child {
  margin: 4px 0 7px;
}

.g-cells .tall svg:first-child {
  margin: -2px 0 7px;
}

.g-editing .tools {
  padding-left: 14px;
}

.g-editing .stack {
  width: 113px;
  margin-top: -2px;
}

.g-editing .row-btn {
  gap: 4px;
}

.g-editing .row-btn svg:last-child {
  margin-left: 1px;
}

.g-editing .wide svg:last-child {
  margin-left: 10px;
}

.sort {
  margin-right: 4px;
}

.g-analysis .tools,
.g-sens .tools {
  justify-content: center;
}

.collapse {
  position: absolute;
  right: 8px;
  bottom: 1px;
  width: 18px;
  height: 14px;
}

/* formula bar */
.formula {
  display: flex;
  align-items: flex-start;
  flex: none;
  height: 103px;
  padding: 13px 6px 0;
  background: linear-gradient(#cfcfcf, #e6e6e6 8px);
}

.namebox,
.fx {
  display: flex;
  align-items: center;
  height: 30px;
  border: 1px solid #c6c6c6;
  background-color: white;
}

.namebox {
  width: 127px;
  padding: 0 8px 0 6px;
}

.namebox input {
  width: 104px;
}

.tri-down {
  border: 4px solid transparent;
  border-top: 5px solid #777;
  border-bottom: 0;
}

.dots {
  width: 3px;
  height: 13px;
  background: repeating-linear-gradient(#aaa 0 3px, transparent 3px 5px);
}

.formula .dots {
  margin: 8px 17px 0;
}

.fx {
  width: 137px;
  margin-right: 3px;
}

.fx button {
  flex: 1;
}

.fn {
  align-items: baseline;
  color: #666;
  font-family: 'Liberation Serif', serif;
  font-size: 21px;
  font-style: italic;
  line-height: 24px;
}

.fn small {
  font-size: 16px;
}

.entry {
  display: flex;
  flex: 1;
  height: 78px;
  padding: 11px 4px 0 0;
  border: 1px solid #c6c6c6;
  background-color: white;
}

.entry textarea {
  flex: 1;
  resize: none;
}

/* worksheet */
.sheet {
  display: flex;
  flex: 1;
  min-height: 0;
}

.grid {
  position: relative;
  flex: 1;
  overflow: hidden;
  border-right: 1px solid #9b9b9b;
  border-bottom: 1px solid #9b9b9b;
  background-color: white;
}

.cells {
  width: 1930px;
  table-layout: fixed;
  border-spacing: 0;
}

.cells th,
.cells td {
  height: 24px;
  width: 79px;
  border-right: 1px solid #d4d4d4;
  border-bottom: 1px solid #d4d4d4;
}

.cells th {
  padding-bottom: 2px;
  background-color: #e6e6e6;
  border-right-color: #9b9b9b;
  border-bottom-color: #9b9b9b;
  color: #111;
  font-size: 16px;
  font-weight: 400;
  line-height: 20px;
}

.cells thead th {
  border-right-color: #b5b5b5;
}

.cells .corner {
  width: 34px;
  background: linear-gradient(135deg, #e6e6e6 50%, #b4b4b4 50%) no-repeat 14px 4px / 16px 16px, #e6e6e6;
}

.cells thead .picked {
  padding-bottom: 1px;
  background-color: #d2d2d2;
  border-bottom: 2px solid #217346;
  color: #217346;
}

.cells tbody .picked {
  background-color: #d2d2d2;
  border-right: 2px solid #217346;
  color: #217346;
}

.cells .cursor {
  position: relative;
}

.cells .cursor::before {
  content: "";
  position: absolute;
  left: -2px;
  top: -2px;
  width: 82px;
  height: 27px;
  border: 2px solid #217346;
}

.cells .cursor::after {
  content: "";
  position: absolute;
  right: -3px;
  bottom: -3px;
  width: 6px;
  height: 6px;
  border: 1px solid white;
  border-width: 1px 0 0 1px;
  background-color: #217346;
}

/* pasted pictures floating over the cells */
.picture {
  position: absolute;
  top: 24px;
  background-color: white;
  color: #111;
  white-space: nowrap;
}

.picture p {
  font-family: 'Liberation Serif', serif;
}

.problem {
  left: 294px;
  width: 842px;
  height: 634px;
  padding: 1px 5px 0 52px;
  border-left: 5px solid #fafafa;
}

.check {
  height: 107px;
  padding: 23px 19px;
  margin-bottom: 17px;
  background-color: #c6d9f1;
  font-family: Lato, sans-serif;
}

.check h2 {
  margin-bottom: 6px;
  font-size: 14px;
  font-weight: 700;
  line-height: 20px;
}

.check dl {
  display: grid;
  grid-template-columns: 51px 1fr;
  font-size: 14px;
  line-height: 22px;
}

.problem p {
  margin-bottom: 8px;
  font-size: 14px;
  line-height: 22px;
}

.sales {
  width: 100%;
  height: 301px;
  margin-top: 31px;
  border-spacing: 0;
  background-color: #ededed;
  font-family: Lato, sans-serif;
  font-size: 12px;
}

.sales td {
  padding: 0 0 2px 6px;
}

.sales td:first-child {
  width: 517px;
}

.expenses {
  left: 1751px;
  width: 180px;
  height: 602px;
  padding-left: 33px;
  overflow: hidden;
}

.expenses p {
  font-size: 16px;
  line-height: 25px;
}

.expenses p:first-child {
  margin: -15px 0 10px;
}

.expenses ul {
  margin: 36px 0 30px;
  padding-bottom: 5px;
  background-color: #ededed;
  font-family: Lato, sans-serif;
  font-size: 13px;
  line-height: 38px;
  list-style: none;
}

.expenses li {
  padding-left: 7px;
}

.expenses .sub {
  padding-left: 38px;
}

/* scrollbars */
.vscroll {
  display: flex;
  flex-direction: column;
  width: 25px;
  padding: 2px 3px 0;
}

.vscroll button,
.hscroll button {
  width: 19px;
  height: 19px;
  border: 1px solid #ababab;
  background-color: white;
}

.track {
  flex: 1;
  background-color: #dadada;
}

.vscroll .thumb {
  height: 82%;
  margin-top: 77px;
  border: 1px solid #ababab;
  background-color: white;
}

.tri {
  border: 5px solid transparent;
}

.tri.up { border-bottom: 6px solid #666; border-top: 0; }
.tri.down { border-top: 6px solid #666; border-bottom: 0; }
.tri.left { border-right: 6px solid #666; border-left: 0; }
.tri.right { border-left: 6px solid #666; border-right: 0; }

/* sheet tabs */
.sheet-tabs {
  display: flex;
  flex: none;
  height: 28px;
  border-bottom: 1px solid #c6c6c6;
}

.sheet-tabs > button {
  position: relative;
  height: 25px;
  padding: 0 16px 4px 15px;
  font-size: 16px;
}

.sheet-tabs > button:not(.active, .first, .last, .add)::after {
  content: "";
  position: absolute;
  right: 0;
  top: 4px;
  width: 1px;
  height: 20px;
  background-color: #ababab;
}

.sheet-tabs .first {
  padding: 0 20px 4px 18px;
}

.sheet-tabs .active {
  padding: 0 12px 2px;
  border-bottom: 2px solid #217346;
  background-color: white;
  color: #217346;
  font-weight: 700;
}

.sheet-tabs .last {
  padding-right: 12px;
}

.sheet-tabs b {
  margin-left: 8px;
  color: #217346;
}

.nav-btns {
  display: flex;
  align-items: center;
  gap: 23px;
  width: 104px;
  height: 20px;
  margin-top: 4px;
  padding-left: 27px;
  border-right: 1px solid #ababab;
}

.nav-btns .left { border-right-color: #bbb; }
.nav-btns .right { border-left-color: #0e6b34; }

.sheet-tabs .add {
  height: 27px;
  padding: 0;
}

.sheet-tabs .dots {
  margin: 7px 15px 0 17px;
}

.hscroll {
  display: flex;
  flex: 1;
  height: 19px;
  margin: 4px 25px 0 0;
}

.hscroll .thumb {
  width: 62%;
  height: 100%;
  border: 1px solid #ababab;
  background-color: white;
}

/* status bar */
.status {
  display: flex;
  align-items: center;
  flex: none;
  height: 27px;
  padding: 0 17px 0 9px;
  background-color: #f3f2f1;
  font-size: 12px;
}

.views {
  display: flex;
  align-self: stretch;
  margin-left: auto;
}

.views button {
  width: 50px;
}

.views .on {
  background-color: #d2d0ce;
}

.zoom {
  display: flex;
  align-items: center;
  gap: 6px;
  margin-left: 7px;
}

.zoom input {
  width: 125px;
  appearance: none;
  background: linear-gradient(#ababab, #ababab) no-repeat center / 100% 1px;
}

.zoom input::-webkit-slider-thumb {
  appearance: none;
  width: 7px;
  height: 14px;
  background-color: #777;
}

.zoom span {
  margin-left: 11px;
}

/* taskbar */
.taskbar {
  display: flex;
  flex: none;
  height: 50px;
  background-color: #cde0e7;
  color: #111;
}

.start {
  width: 60px;
}

.task-search {
  display: flex;
  align-items: center;
  gap: 14px;
  width: 430px;
  padding-left: 15px;
  border: 1px solid #c3ced2;
  background-color: white;
  font-size: 18px;
}

.task-search input::placeholder {
  color: #222;
  opacity: 1;
}

.apps {
  display: flex;
}

.apps button {
  width: 62px;
  border-top: 3px solid transparent;
  border-bottom: 3px solid transparent;
}

.apps .open {
  width: 52px;
  margin: 0 5px;
  border-bottom-color: #2eb6cc;
}

.apps .alert {
  background-color: #f5b17b;
  border-top-color: #f5b17b;
  border-bottom-color: #ff6f00;
}

.apps .current {
  width: 62px;
  margin: 0;
  background-color: #e8f2f5;
}

.tray {
  display: flex;
  align-items: center;
  gap: 13px;
  margin-left: auto;
  padding-right: 20px;
}

.weather {
  margin-left: 18px;
}

.temp {
  margin-right: 8px;
  font-size: 16px;
}

.lang {
  margin-left: -2px;
}

.clock {
  display: flex;
  flex-direction: column;
  align-items: center;
  font-size: 15px;
  line-height: 22px;
}

.notes {
  position: relative;
  width: 34px;
  height: 34px;
  margin-left: 5px;
}

.notes b {
  position: absolute;
  right: 0;
  bottom: -3px;
  width: 20px;
  height: 20px;
  border: 1px solid #888;
  border-radius: 10px;
  background-color: #d5dadc;
  font-size: 13px;
  line-height: 18px;
}
```

FILE: script.js
```javascript
const cols = 'ABCDEFGHIJKLMNOPQRSTUVWX'.split('');
const head = document.getElementById('cols');
const body = document.getElementById('rows');

cols.forEach(function (name) {
  const th = document.createElement('th');
  th.textContent = name;
  if (name === 'O') th.className = 'picked';
  head.appendChild(th);
});

for (let r = 5; r <= 31; r++) {
  const tr = document.createElement('tr');
  const th = document.createElement('th');
  th.textContent = r;
  if (r === 14) th.className = 'picked';
  tr.appendChild(th);
  cols.forEach(function (name) {
    const td = document.createElement('td');
    if (r === 14 && name === 'O') td.className = 'cursor';
    tr.appendChild(td);
  });
  body.appendChild(tr);
}
```
